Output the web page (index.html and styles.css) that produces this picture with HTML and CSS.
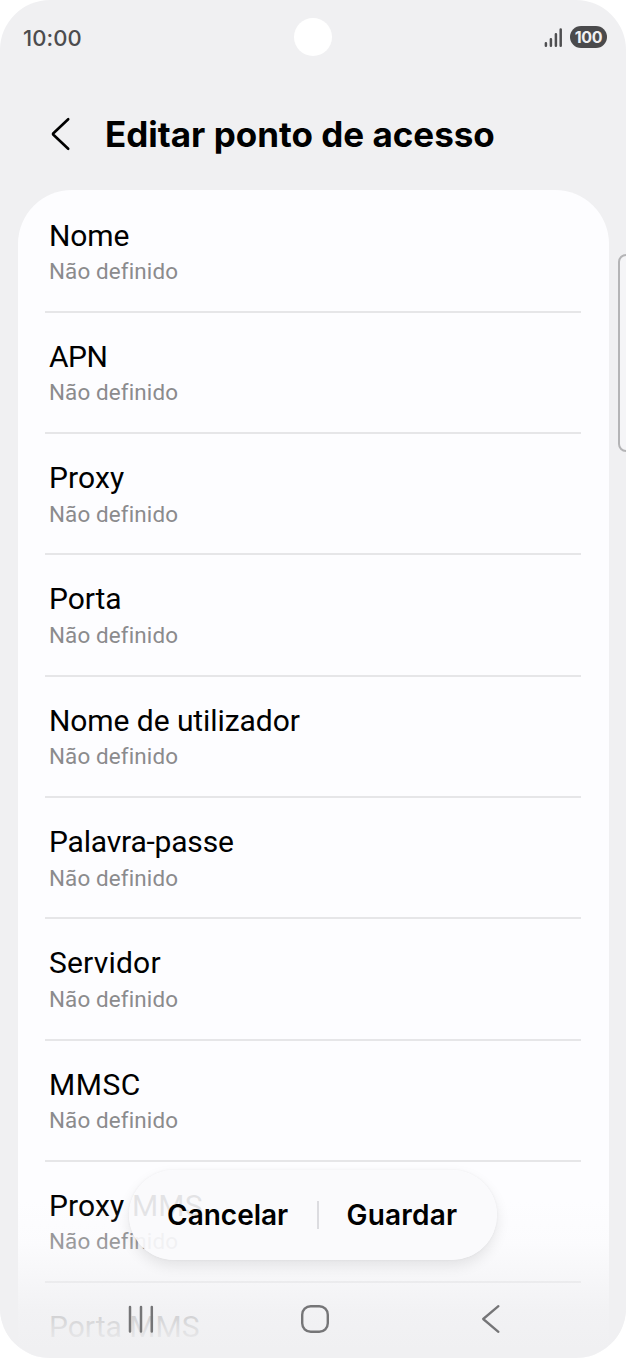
FILE: index.html
```
<!DOCTYPE html>
<html lang="pt">
<head>
<meta charset="utf-8">
<title>Editar ponto de acesso</title>
<link rel="stylesheet" href="styles.css">
</head>
<body>
<div class="screen">
  <header class="status">
    <span class="time">10:00</span>
    <span class="camera"></span>
    <span class="indicators">
      <svg class="signal" width="18" height="20" viewBox="0 0 18 20" fill="none" stroke="#4f4f51" stroke-width="2.5" stroke-linecap="round"><path d="M1.9 15.2V17.8M6.9 11.2V17.8M11.9 6.2V17.8M16.7 1.4V17.8"/></svg>
      <span class="battery">100</span>
    </span>
  </header>
  <div class="title-bar">
    <svg class="back" width="22" height="34" viewBox="0 0 22 34" fill="none" stroke="#000" stroke-width="2.6" stroke-linecap="round" stroke-linejoin="round"><path d="M18.2 2.2L3.4 16.2Q2.6 17 3.4 17.8L18.2 31.8"/></svg>
    <h1 class="title">Editar ponto de acesso</h1>
  </div>
  <main class="card">
    <div class="row"><div class="name">Nome</div><div class="value">Não definido</div></div>
    <div class="row"><div class="name name-apn">APN</div><div class="value">Não definido</div></div>
    <div class="row"><div class="name name-proxy">Proxy</div><div class="value">Não definido</div></div>
    <div class="row"><div class="name">Porta</div><div class="value">Não definido</div></div>
    <div class="row"><div class="name">Nome de utilizador</div><div class="value">Não definido</div></div>
    <div class="row"><div class="name name-password">Palavra-passe</div><div class="value">Não definido</div></div>
    <div class="row"><div class="name name-server">Servidor</div><div class="value">Não definido</div></div>
    <div class="row"><div class="name name-mmsc">MMSC</div><div class="value">Não definido</div></div>
    <div class="row"><div class="name name-proxy">Proxy MMS</div><div class="value">Não definido</div></div>
    <div class="row"><div class="name name-port">Porta MMS</div></div>
  </main>
  <div class="edge-handle"></div>
  <div class="fade"></div>
  <div class="actions">
    <span class="action cancel">Cancelar</span>
    <span class="divider"></span>
    <span class="action save">Guardar</span>
  </div>
  <nav class="nav">
    <svg width="26" height="30" viewBox="0 0 26 30" fill="none" stroke="#757577" stroke-width="2.5" stroke-linecap="round"><path d="M2 3V27.4M13 3V27.4M23.8 3V27.4"/></svg>
    <svg class="home" width="30" height="30" viewBox="0 0 30 30" fill="none" stroke="#757577" stroke-width="2.4"><rect x="2.2" y="2.2" width="25.6" height="25.6" rx="8.5"/></svg>
    <svg width="20" height="30" viewBox="0 0 20 30" fill="none" stroke="#757577" stroke-width="2.3" stroke-linecap="round" stroke-linejoin="round"><path d="M17.4 2.2L2.2 15L17.4 27.8"/></svg>
  </nav>
</div>
</body>
</html>
```
FILE: styles.css
```
* { box-sizing: border-box; }
body { margin: 0; background: #fff; font-family: Roboto, sans-serif; }
.screen {
  position: relative;
  width: 626px;
  height: 1358px;
  overflow: hidden;
  display: flex;
  flex-direction: column;
  background: #f0f0f2;
  border-radius: 50px;
}
.status {
  height: 74px;
  flex: none;
  display: grid;
  grid-template-columns: 1fr 38px 1fr;
  align-items: center;
  padding: 0 19px 0 23px;
}
.time {
  font: 500 22px/26px Inter, sans-serif;
  letter-spacing: 0.1px;
  color: #4c4c4e;
  padding-top: 1px;
}
.camera {
  width: 38px;
  height: 38px;
  margin: -1px 0 0 -2px;
  border-radius: 50%;
  background: #fff;
}
.indicators { display: flex; justify-content: flex-end; align-items: center; gap: 8px; }
.signal { margin-top: 1px; }
.battery {
  width: 37px;
  height: 22px;
  border-radius: 11px;
  background: #4a4a4c;
  color: #f0f0f2;
  font: 700 16px/22px Inter, sans-serif;
  letter-spacing: -0.3px;
  text-align: center;
}
.title-bar {
  height: 116px;
  flex: none;
  display: flex;
  align-items: flex-start;
  padding: 43px 0 0 50px;
}
.title {
  margin: -4px 0 0 33px;
  font: 700 35px/42px Inter, sans-serif;
  white-space: nowrap;
  color: #000;
}
.card {
  flex: none;
  width: 591px;
  height: 1180px;
  margin-left: 17.5px;
  padding: 1.5px 27.5px 0;
  border-radius: 54px 54px 0 0;
  background: #fdfdff;
}
.row {
  height: 121.3px;
  padding: 26px 4px 0;
  border-bottom: 2px solid #e6e6e8;
}
.name { font-size: 30px; line-height: 36px; letter-spacing: -0.07px; color: #000; white-space: nowrap; }
.name-apn { letter-spacing: -0.5px; }
.name-proxy { letter-spacing: 0.15px; }
.name-password { letter-spacing: -0.2px; }
.name-server { letter-spacing: 0.2px; }
.name-mmsc { letter-spacing: 0.5px; }
.name-port { letter-spacing: 0; }
.value {
  margin-top: 2.6px;
  font-size: 22.4px;
  line-height: 30px;
  letter-spacing: 0.14px;
  color: #8b8b8d;
}
.edge-handle {
  position: absolute;
  left: 618px;
  top: 254px;
  width: 20px;
  height: 198px;
  border: 2px solid #b4b4b6;
  border-radius: 8px;
  background: #f5f5f7;
}
.fade {
  position: absolute;
  left: 0;
  right: 0;
  bottom: 0;
  height: 158px;
  background: linear-gradient(rgba(240,240,242,0), rgba(240,240,242,.14) 27%, rgba(240,240,242,.55) 52%, rgba(240,240,242,.85) 70%, rgba(240,240,242,.92) 80%, #f0f0f2 95%);
}
.actions {
  position: absolute;
  left: 129px;
  top: 1170px;
  width: 368px;
  height: 90px;
  display: flex;
  align-items: center;
  border-radius: 45px;
  background: rgba(249,249,252,.91);
  box-shadow: 0 6px 14px rgba(0,0,0,.09), 0 0 3px rgba(0,0,0,.05);
}
.action { font: 600 28px/34px Inter, sans-serif; color: #000; }
.cancel { margin-left: 38px; width: 150px; }
.divider { width: 2px; height: 28px; background: #dcdce0; }
.save { margin-left: 27.5px; letter-spacing: 0.2px; }
.nav {
  position: absolute;
  left: 127.5px;
  top: 1304px;
  width: 373.5px;
  display: flex;
  justify-content: space-between;
}
.home { margin-left: -5px; }
```
